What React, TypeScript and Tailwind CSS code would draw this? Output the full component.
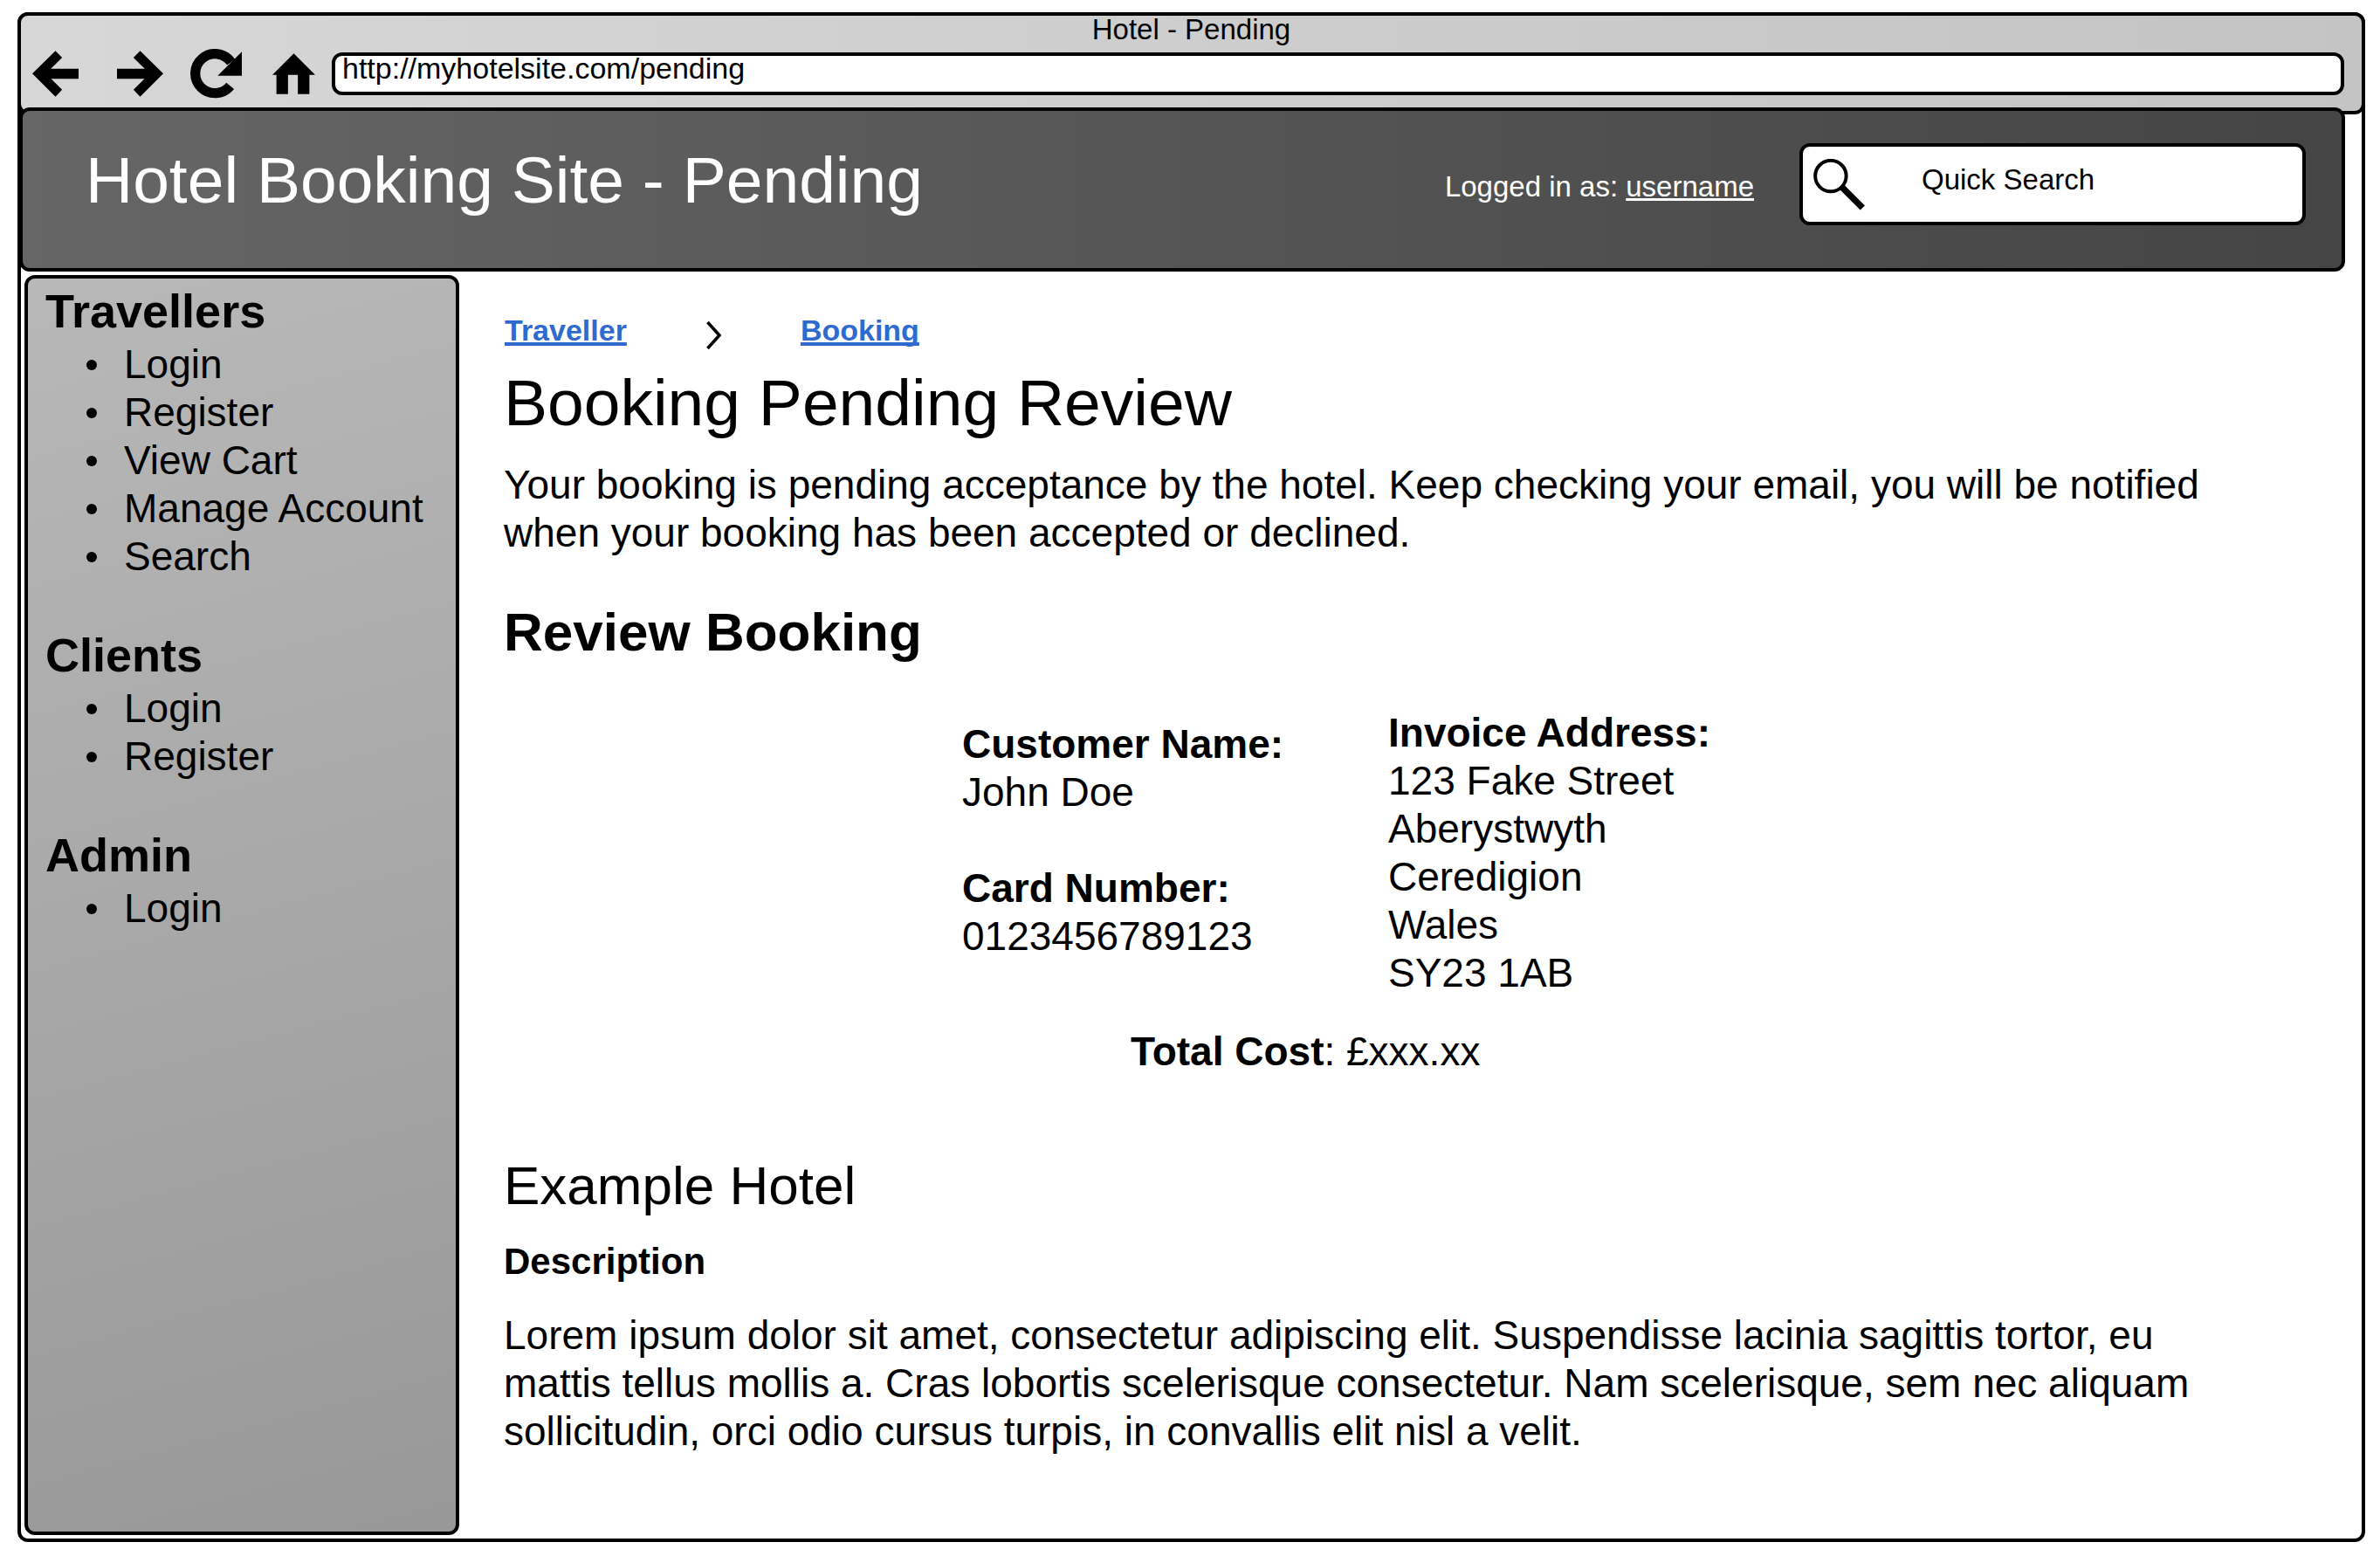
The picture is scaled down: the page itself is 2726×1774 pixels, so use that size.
import type { ReactNode } from "react";

const navGroups = [
  { title: "Travellers", items: ["Login", "Register", "View Cart", "Manage Account", "Search"] },
  { title: "Clients", items: ["Login", "Register"] },
  { title: "Admin", items: ["Login"] },
];

const address = ["123 Fake Street", "Aberystwyth", "Ceredigion", "Wales", "SY23 1AB"];

function BackIcon() {
  return (
    <svg viewBox="80 172 160 160" className="block size-[53px]" aria-hidden="true">
      <path d="M80 251.5 160 173l23 23-39 39h96v34h-95l38 38-23 24z" />
    </svg>
  );
}

function ForwardIcon() {
  return (
    <svg viewBox="372 172 160 160" className="block size-[53px]" aria-hidden="true">
      <path d="M532 251.5 452 173l-23 23 39 39h-96v34h95l-38 38 23 24z" />
    </svg>
  );
}

function ReloadIcon() {
  return (
    <svg viewBox="624 164 177 171" className="block h-[57px] w-[59px]" aria-hidden="true">
      <path d="M761 291A67.5 67.5 0 1 1 764 210" fill="none" stroke="#000" strokeWidth="34" />
      <path d="M801 174v82h-83z" />
    </svg>
  );
}

function HomeIcon() {
  return (
    <svg viewBox="907 181 148 141" className="block h-[47px] w-[49px]" aria-hidden="true">
      <path d="M981 181l74 74h-20v67h-40v-67h-34v67h-40v-67h-14z" />
    </svg>
  );
}

function SearchIcon() {
  return (
    <svg viewBox="80 79 178 178" className="block size-[59px] shrink-0" aria-hidden="true">
      <circle cx="140" cy="138" r="53.5" fill="#fff" stroke="#000" strokeWidth="12" />
      <path d="M178 176l72 72" stroke="#000" strokeWidth="22" />
    </svg>
  );
}

function ToolButton({ label, className, children }: { label: string; className: string; children: ReactNode }) {
  return (
    <button type="button" aria-label={label} className={className}>
      {children}
    </button>
  );
}

function BrowserBar() {
  return (
    <div className="-mx-1 -mt-1 rounded-xl border-4 border-black bg-linear-to-r from-[#d7d7d7] to-[#c4c4c4] pb-[14px]">
      <div className="text-center leading-8">Hotel - Pending</div>
      <div className="mt-[6px] flex items-center pr-5 pl-[13px]">
        <ToolButton label="Back" className="mr-11"><BackIcon /></ToolButton>
        <ToolButton label="Forward" className="mr-[31px]"><ForwardIcon /></ToolButton>
        <ToolButton label="Reload" className="mr-[35px]"><ReloadIcon /></ToolButton>
        <ToolButton label="Home" className="mr-[19px]"><HomeIcon /></ToolButton>
        <input
          type="text"
          aria-label="Address"
          defaultValue="http://myhotelsite.com/pending"
          className="h-[49px] min-w-0 flex-1 rounded-xl border-4 border-black bg-white pb-3 pl-2 text-[34px] outline-none"
        />
      </div>
    </div>
  );
}

function SiteHeader() {
  return (
    <header className="relative -mt-2 mr-[19px] -ml-[2px] flex items-start rounded-xl border-4 border-black bg-linear-to-r from-[#666666] to-[#454545] pt-[37px] pr-[41px] pb-[49px] pl-[72px] text-white">
      <div className="text-[75px] leading-[84px]">Hotel Booking Site - Pending</div>
      <p className="mt-[30px] ml-auto leading-[40px]">
        Logged in as:{" "}
        <a href="#account" className="underline decoration-[3px] underline-offset-[2px]">username</a>
      </p>
      <label className="ml-[52px] flex h-[94px] w-[580px] items-center gap-[65px] rounded-xl border-4 border-black bg-white pl-3 text-black">
        <SearchIcon />
        <input
          type="text"
          aria-label="Quick Search"
          defaultValue="Quick Search"
          className="min-w-0 flex-1 bg-transparent pb-[11px] outline-none"
        />
      </label>
    </header>
  );
}

function Sidebar() {
  return (
    <nav className="flex w-[498px] shrink-0 flex-col gap-[54px] rounded-xl border-4 border-black bg-linear-[165deg] from-[#b8b8b8] to-[#989898] pt-[6px] pl-5">
      {navGroups.map((group) => (
        <section key={group.title}>
          <h2 className="text-[54px] leading-[62px] font-bold">{group.title}</h2>
          <ul className="mt-[3px] text-[46px] leading-[55px]">
            {group.items.map((item) => (
              <li key={item} className="flex items-center gap-[31px] pl-[47px] whitespace-nowrap">
                <span className="size-3 shrink-0 rounded-full bg-black" />
                <a href={"#" + item}>{item}</a>
              </li>
            ))}
          </ul>
        </section>
      ))}
    </nav>
  );
}

function BookingDetails() {
  return (
    <>
      <div className="mt-[53px] flex items-start pl-[525px]">
        <dl className="w-[488px] pt-[13px]">
          <dt className="font-bold">Customer Name:</dt>
          <dd>John Doe</dd>
          <dt className="mt-[55px] font-bold">Card Number:</dt>
          <dd>0123456789123</dd>
        </dl>
        <dl>
          <dt className="font-bold">Invoice Address:</dt>
          {address.map((line) => (
            <dd key={line}>{line}</dd>
          ))}
        </dl>
      </div>
      <p className="mt-[35px] pl-[718px]">
        <strong className="font-bold">Total Cost</strong>: £xxx.xx
      </p>
    </>
  );
}

function Content() {
  return (
    <main className="min-w-0 flex-1 pt-[43px] pr-[138px] pl-[51px] text-[46px] leading-[55px]">
      <div className="flex items-start gap-[91px] pl-px text-[34px] leading-[40px] font-bold text-[#2f6bce]">
        <a href="#traveller" className="underline decoration-4 underline-offset-[2px] [text-decoration-skip-ink:none]">Traveller</a>
        <svg viewBox="0 0 17 32" className="mt-[10px] h-8 w-[17px]" fill="none" stroke="#000" strokeWidth="3.6" aria-hidden="true">
          <path d="M1.5 1 15 16 1.5 31" />
        </svg>
        <a href="#booking" className="underline decoration-4 underline-offset-[2px] [text-decoration-skip-ink:none]">Booking</a>
      </div>
      <h1 className="mt-[19px] text-[75px] leading-[84px]">Booking Pending Review</h1>
      <p className="mt-[25px]">
        Your booking is pending acceptance by the hotel. Keep checking your email, you will be notified when your
        booking has been accepted or declined.
      </p>
      <h2 className="mt-[51px] text-[62px] leading-[70px] font-bold">Review Booking</h2>
      <BookingDetails />
      <h2 className="mt-[91px] text-[62px] leading-[70px]">Example Hotel</h2>
      <h3 className="mt-[27px] text-[42px] leading-[50px] font-bold">Description</h3>
      <p className="mt-8">
        Lorem ipsum dolor sit amet, consectetur adipiscing elit. Suspendisse lacinia sagittis tortor, eu mattis tellus
        mollis a. Cras lobortis scelerisque consectetur. Nam scelerisque, sem nec aliquam sollicitudin, orci odio
        cursus turpis, in convallis elit nisl a velit.
      </p>
    </main>
  );
}

export default function App() {
  return (
    <div className="flex min-h-screen bg-white pt-[14px] pr-[17px] pb-2 pl-5 font-['Liberation_Sans',Arial,sans-serif] text-[33px] text-black">
      <div className="flex min-w-0 flex-1 flex-col rounded-xl border-4 border-black">
        <BrowserBar />
        <SiteHeader />
        <div className="flex flex-1 pt-1 pb-1 pl-1">
          <Sidebar />
          <Content />
        </div>
      </div>
    </div>
  );
}
